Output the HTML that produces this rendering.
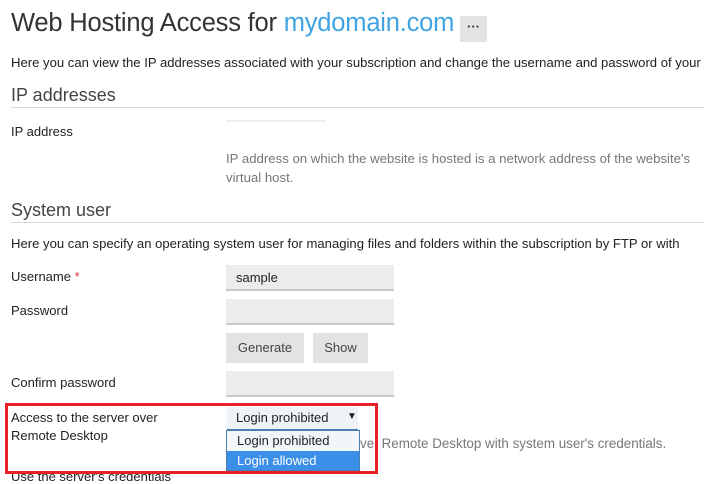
<!DOCTYPE html>
<html><head><meta charset="utf-8"><style>
body{margin:0;width:704px;height:474px;overflow:hidden;background:#fff;font-family:"Liberation Sans",sans-serif;color:#222;position:relative}
.a{position:absolute;white-space:nowrap}
.t{font-size:13px}
.g{color:#777}
.inp{position:absolute;left:226px;width:168px;height:24px;background:#ececec;border-bottom:2px solid #c4c8cc}
.btn{position:absolute;top:333px;height:30px;background:#e3e3e3;color:#444;font-size:13px;line-height:30px;text-align:center}
.hr{position:absolute;left:11px;right:0;height:1px;background:#d8d8d8}
</style></head><body>
<div class="a" style="left:11px;top:9px;font-size:25.5px;color:#333;letter-spacing:-0.2px">Web Hosting Access for <span style="color:#3ea3e0">mydomain.com</span></div>
<div class="a" style="left:460px;top:16px;width:27px;height:26px;background:#e3e3e3;font-size:13px;line-height:22px;text-align:center;color:#333;font-weight:bold">···</div>
<div class="a t" style="left:11px;top:55px;font-size:13.1px">Here you can view the IP addresses associated with your subscription and change the username and password of your</div>
<div class="a" style="left:11px;top:85px;font-size:18px;color:#444">IP addresses</div>
<div class="hr" style="top:107px"></div>
<div class="a t" style="left:11px;top:124px">IP address</div>
<div class="a" style="left:226px;top:120px;width:100px;height:2px;background:#eee"></div>
<div class="a t g" style="left:226px;top:151px;font-size:13.2px">IP address on which the website is hosted is a network address of the website's</div>
<div class="a t g" style="left:226px;top:170px;font-size:13.2px">virtual host.</div>
<div class="a" style="left:11px;top:200px;font-size:18px;color:#444">System user</div>
<div class="hr" style="top:222px"></div>
<div class="a t" style="left:11px;top:236px;font-size:13.1px">Here you can specify an operating system user for managing files and folders within the subscription by FTP or with</div>
<div class="a t" style="left:11px;top:269px">Username <span style="color:#d33">*</span></div>
<div class="inp" style="top:265px"><span style="position:absolute;left:10px;top:5px;font-size:13px;color:#222">sample</span></div>
<div class="a t" style="left:11px;top:303px">Password</div>
<div class="inp" style="top:299px"></div>
<div class="btn" style="left:226px;width:78px">Generate</div>
<div class="btn" style="left:313px;width:55px">Show</div>
<div class="a t" style="left:11px;top:375px">Confirm password</div>
<div class="inp" style="top:371px"></div>
<div class="a t" style="left:11px;top:410px">Access to the server over</div>
<div class="a t" style="left:11px;top:428px">Remote Desktop</div>
<div class="a t g" style="left:360px;top:436px;font-size:13.4px">ve&nbsp; Remote Desktop with system user's credentials.</div>
<div class="a t" style="left:11px;top:469px">Use the server's credentials</div>
<div class="a" style="left:227px;top:407px;width:131px;height:22px;background:#eef3f8;border-bottom:1px solid #4a7fb0"><span style="position:absolute;left:9px;top:3px;font-size:13px">Login prohibited</span><span style="position:absolute;left:120px;top:4px;font-size:10px">▼</span></div>
<div class="a" style="left:226px;top:430px;width:132px;height:39px;border:1px solid #4a7fb0;background:#f2f6fa">
<div style="position:absolute;left:10px;top:2px;font-size:13px">Login prohibited</div>
<div style="position:absolute;left:0;top:20px;width:132px;height:19px;background:#3c8fe8;color:#fff;font-size:13px;line-height:19px;text-indent:10px">Login allowed</div>
</div>
<div class="a" style="left:5px;top:403px;width:367px;height:65px;border:3px solid #e8202a"></div>
</body></html>
